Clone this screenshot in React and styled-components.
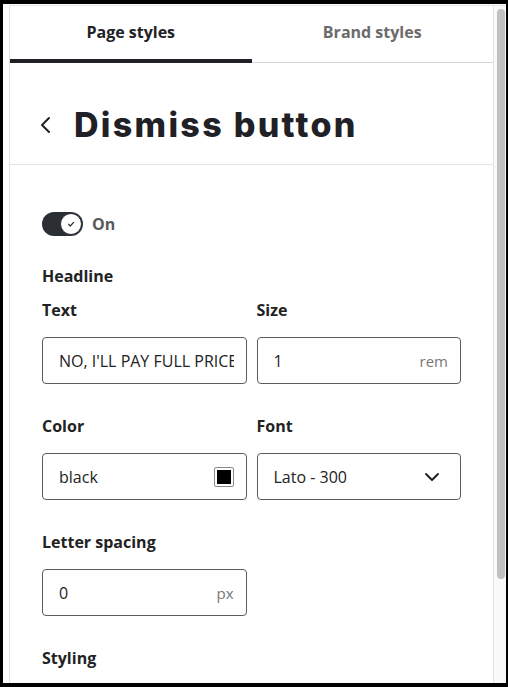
import React from 'react';
import styled, { createGlobalStyle } from 'styled-components';

const GlobalStyle = createGlobalStyle`
  html, body {
    margin: 0;
    padding: 0;
    background: #000;
  }
  * {
    box-sizing: border-box;
  }
`;

const Frame = styled.div`
  width: 508px;
  height: 687px;
  padding: 4px 2px 4px 3px;
  background: #000;
`;

const Screen = styled.div`
  height: 100%;
  background: #fff;
  padding: 1px 0 0 6px;
  display: flex;
`;

const Panel = styled.div`
  flex: 1;
  min-width: 0;
  border-left: 1px solid #e4e4e4;
  border-top: 1px solid #e4e4e4;
  overflow: hidden;
  font-family: "Open Sans", "Noto Sans", sans-serif;
  color: #222;
`;

/* side scrollbar of the settings panel */
const ScrollTrack = styled.div`
  width: 13px;
  background: #f9f9f9;
  border-left: 1px solid #e4e4e4;
  border-top: 1px solid #e4e4e4;
  padding: 3px 1px 0 3px;
`;

const Thumb = styled.div`
  height: 570px;
  border-radius: 5px;
  background: #c1c1c1;
`;

const Tabs = styled.div`
  display: flex;
`;

const Tab = styled.div`
  flex: 1;
  height: 57px;
  display: flex;
  align-items: center;
  justify-content: center;
  padding-bottom: 5px;
  font-size: 16px;
  font-weight: 700;
  color: ${p => (p.$active ? '#1f2126' : '#6b6b6b')};
  border-bottom: 1px solid ${p => (p.$active ? '#1f2126' : '#d6d6d6')};
  box-shadow: ${p => (p.$active ? 'inset 0 -3px 0 #1f2126' : 'none')};
`;

const Header = styled.div`
  display: flex;
  align-items: center;
  gap: 22px;
  height: 102px;
  padding: 22px 30px 0 30px;
  border-bottom: 1px solid #e4e4e4;
`;

const Title = styled.h1`
  margin: 0;
  font-family: Inter, "Noto Sans", sans-serif;
  font-weight: 800;
  font-size: 34px;
  letter-spacing: 2.3px;
  color: #1f2126;
`;

const Body = styled.div`
  padding: 47px 32px 130px 32px;
`;

const ToggleRow = styled.div`
  display: flex;
  align-items: center;
  gap: 9px;
  margin-bottom: 30px;
`;

const Track = styled.div`
  width: 41px;
  height: 24px;
  border-radius: 12px;
  background: #2b2e35;
  display: flex;
  align-items: center;
  justify-content: flex-end;
  padding-right: 1px;
`;

const Knob = styled.div`
  width: 22px;
  height: 22px;
  border-radius: 50%;
  background: #fff;
  border: 1px solid #2b2e35;
  display: flex;
  align-items: center;
  justify-content: center;
`;

const ToggleText = styled.span`
  font-size: 16px;
  font-weight: 700;
  color: #5a5a5a;
`;

const Section = styled.div`
  font-size: 16px;
  font-weight: 700;
  line-height: 20px;
  margin-bottom: 14px;
`;

const Grid = styled.div`
  display: grid;
  grid-template-columns: minmax(0, 1fr) minmax(0, 1fr);
  column-gap: 10px;
  row-gap: 32px;
  margin-bottom: 32px;
`;

const Field = styled.div`
  display: flex;
  flex-direction: column;
  min-width: 0;
`;

const Label = styled.label`
  font-size: 16px;
  font-weight: 700;
  line-height: 20px;
  margin-bottom: 17px;
`;

const Box = styled.div`
  height: 47px;
  border: 1px solid #5c5c5c;
  border-radius: 4px;
  display: flex;
  align-items: center;
  gap: 8px;
  padding: 0 ${p => (p.$tight ? '12px' : '20px')} 0 16px;
  font-size: 16px;
  color: #222;
`;

const Value = styled.span`
  flex: 1;
  min-width: 0;
  white-space: nowrap;
  overflow: hidden;
`;

const Unit = styled.span`
  font-size: 15px;
  color: #777;
`;

const Swatch = styled.span`
  flex-shrink: 0;
  width: 20px;
  height: 20px;
  border: 1px solid #8a8a8a;
  border-radius: 2px;
  padding: 2px;
  display: flex;

  &::after {
    content: '';
    flex: 1;
    background: ${p => p.$color};
  }
`;

const Check = () => (
  <svg width="10" height="10" viewBox="0 0 10 10">
    <polyline points="2.5,5.2 4.3,7 7.6,3.4" fill="none" stroke="#2b2e35" strokeWidth="1.2" strokeLinecap="round" strokeLinejoin="round" />
  </svg>
);

const BackIcon = () => (
  <svg width="12" height="18" viewBox="0 0 12 18">
    <polyline points="9,2 2,9 9,16" fill="none" stroke="#1f2126" strokeWidth="2" strokeLinecap="round" strokeLinejoin="round" />
  </svg>
);

const ChevronDown = () => (
  <svg width="16" height="10" viewBox="0 0 16 10">
    <polyline points="2,2 8,8 14,2" fill="none" stroke="#1f2126" strokeWidth="2" strokeLinecap="round" strokeLinejoin="round" />
  </svg>
);

const App = () => {
  return (
    <Frame>
      <GlobalStyle />
      <Screen>
        <Panel>
          <Tabs>
            <Tab $active>Page styles</Tab>
            <Tab>Brand styles</Tab>
          </Tabs>
          <Header>
            <BackIcon />
            <Title>Dismiss button</Title>
          </Header>
          <Body>
            <ToggleRow>
              <Track>
                <Knob><Check /></Knob>
              </Track>
              <ToggleText>On</ToggleText>
            </ToggleRow>
            <Section>Headline</Section>
            <Grid>
              <Field>
                <Label>Text</Label>
                <Box $tight><Value>NO, I'LL PAY FULL PRICE</Value></Box>
              </Field>
              <Field>
                <Label>Size</Label>
                <Box $tight><Value>1</Value><Unit>rem</Unit></Box>
              </Field>
              <Field>
                <Label>Color</Label>
                <Box $tight><Value>black</Value><Swatch $color="#000" /></Box>
              </Field>
              <Field>
                <Label>Font</Label>
                <Box><Value>Lato - 300</Value><ChevronDown /></Box>
              </Field>
              <Field>
                <Label>Letter spacing</Label>
                <Box $tight><Value>0</Value><Unit>px</Unit></Box>
              </Field>
            </Grid>
            <Section>Styling</Section>
          </Body>
        </Panel>
        <ScrollTrack>
          <Thumb />
        </ScrollTrack>
      </Screen>
    </Frame>
  );
};

export default App;
